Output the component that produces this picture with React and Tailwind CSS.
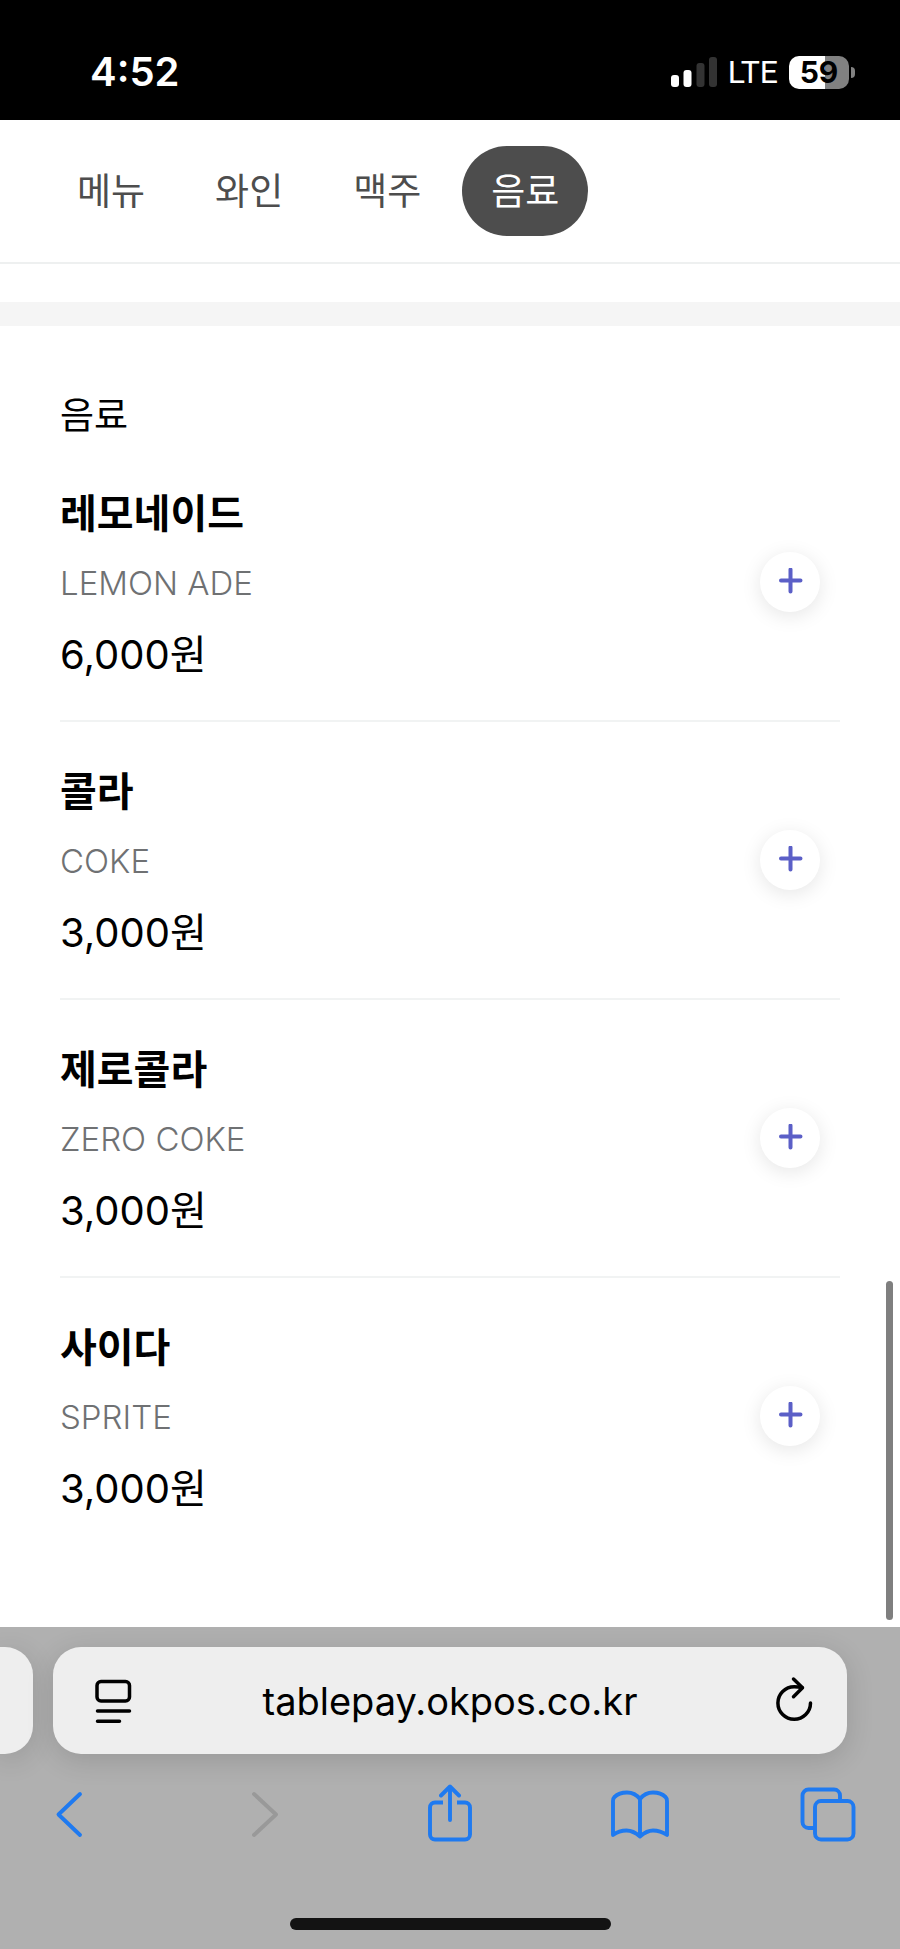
import { useState } from "react";

const categories = ["메뉴", "와인", "맥주", "음료"];

const drinks = [
  { id: 1, name: "레모네이드", description: "LEMON ADE", price: 6000 },
  { id: 2, name: "콜라", description: "COKE", price: 3000 },
  { id: 3, name: "제로콜라", description: "ZERO COKE", price: 3000 },
  { id: 4, name: "사이다", description: "SPRITE", price: 3000 },
];

function StatusBar() {
  return (
    <header className="flex h-[120px] items-center justify-between bg-black pt-6 pr-[45px] pl-[90px] text-white">
      <span className="text-[40px] leading-none font-semibold">4:52</span>

      <div className="flex items-center gap-[11px]">
        <svg width="46" height="30" viewBox="0 0 46 30" aria-hidden="true">
          <rect x="0" y="18" width="8" height="12" rx="3" fill="#fff" />
          <rect x="12.5" y="13" width="8" height="17" rx="3" fill="#fff" />
          <rect x="25.5" y="6" width="8" height="24" rx="3" fill="#333" />
          <rect x="38" y="0" width="8" height="30" rx="3" fill="#333" />
        </svg>
        <span className="font-['Roboto'] text-[32px] leading-none">LTE</span>
        <div className="flex items-center gap-[2px]">
          <div className="flex h-[33px] w-[60px] items-center justify-center rounded-[10px] bg-linear-to-r from-white from-60% to-[#818181] to-60% text-[30px] leading-none font-bold text-black">
            59
          </div>
          <div className="h-[11px] w-1 rounded-r-full bg-[#818181]" />
        </div>
      </div>
    </header>
  );
}

function CategoryTabs({ active, onChange }) {
  return (
    <nav className="flex gap-3 border-b-2 border-[#eef0f0] px-12 py-[26px]">
      {categories.map((category) => (
        <button
          key={category}
          type="button"
          onClick={() => onChange(category)}
          className={`h-[90px] rounded-full px-[29px] text-[37px] leading-none ${category === active ? "bg-[#4d4d4d] text-white" : "text-[#4d4d4d]"}`}
        >
          {category}
        </button>
      ))}
    </nav>
  );
}

function MenuItem({ item }) {
  return (
    <li className="flex items-center justify-between border-b-2 border-[#f1f3f3] pt-[42px] pb-[37px] last:border-b-0 last:pb-[34px]">
      <div>
        <h3 className="text-[40px] leading-[56px] font-bold">{item.name}</h3>
        <p className="mt-[17px] text-[33px] leading-[48px] font-light text-[#6f7173]">{item.description}</p>
        <p className="mt-5 text-[40px] leading-[56px]">{item.price.toLocaleString("en-US")}원</p>
      </div>

      <button
        type="button"
        aria-label={`${item.name} 담기`}
        className="mr-5 mb-[6px] flex size-[60px] items-center justify-center rounded-full bg-white text-[#5b5fc7] shadow-[0_4px_20px_rgba(0,0,0,0.1)]"
      >
        <svg width="28" height="28" viewBox="0 0 28 28" fill="none" stroke="currentColor" strokeWidth="4" strokeLinecap="round">
          <path d="M14.500 1.500v22M5 12.500h19.500" />
        </svg>
      </button>
    </li>
  );
}

function ToolbarButton({ label, disabled, children }) {
  return (
    <button type="button" aria-label={label} disabled={disabled} className="size-[60px] text-[#1f7af0] disabled:text-[#999]">
      <svg
        width="60"
        height="60"
        viewBox="0 0 60 60"
        fill="none"
        stroke="currentColor"
        strokeWidth="3.9"
        strokeLinecap="round"
        strokeLinejoin="round"
      >
        {children}
      </svg>
    </button>
  );
}

function BrowserBar() {
  return (
    <footer className="bg-[#b0b0b0] pt-5 pb-[19px]">
      <div className="flex gap-5 pr-[53px]">
        <div className="w-[33px] rounded-r-[28px] bg-[#eee] shadow-[0_6px_28px_rgba(0,0,0,0.14)]" />
        <div className="flex h-[107px] min-w-0 flex-1 items-center rounded-[28px] bg-[#eee] px-6 shadow-[0_6px_28px_rgba(0,0,0,0.14)]">
          <button type="button" aria-label="페이지 설정" className="size-16">
            <svg width="64" height="64" viewBox="0 0 64 64" fill="none" stroke="#000" strokeWidth="3.5" strokeLinecap="round">
              <rect x="20" y="12.5" width="32.5" height="19.5" rx="4" />
              <path d="M20.500 42h32M20.500 52.300h22" />
            </svg>
          </button>
          <input
            type="text"
            aria-label="주소"
            defaultValue="tablepay.okpos.co.kr"
            className="min-w-0 flex-1 bg-transparent text-center text-[38px] leading-[48px] outline-none"
          />
          <button type="button" aria-label="새로고침" className="size-16">
            <svg width="64" height="64" viewBox="0 0 64 64" fill="none" stroke="#000" strokeWidth="3.5" strokeLinecap="round" strokeLinejoin="round">
              <path d="M51.500 34A16.300 16.300 0 1 1 35.200 17.700q4 0 8 1" />
              <path d="M34.500 10l9 8.700-9 9" />
            </svg>
          </button>
        </div>
      </div>

      <div className="mt-[30px] flex justify-between pr-[42px] pl-10">
        <ToolbarButton label="뒤로">
          <path d="M40 10L18.500 30.500 40 51" />
        </ToolbarButton>
        <ToolbarButton label="앞으로" disabled>
          <path d="M24 10l22 20.500L24 51" />
        </ToolbarButton>
        <ToolbarButton label="공유">
          <path d="M24 18.500h-8a5 5 0 0 0-5 5v27a5 5 0 0 0 5 5h30a5 5 0 0 0 5-5v-27a5 5 0 0 0-5-5h-8" strokeLinecap="butt" />
          <path d="M31 36V3M22 11.500l9-9 9 9" />
        </ToolbarButton>
        <ToolbarButton label="책갈피">
          <path d="M31 15C27.500 10.500 23 8.500 18 8.500c-5 0-9.500 1.500-12.500 4.500Q4 14.500 4 17v34c4-3 9-4.500 13.500-4.500 5 0 9.500 2.500 13.500 6 4-3.500 8-6 13-6 4.500 0 9.500 1.500 14 4.500V17q0-2.500-1.500-4c-3-3-7.500-4.500-12.500-4.500-5 0-9.500 2-13 6.500zM31 15v37.500" />
        </ToolbarButton>
        <ToolbarButton label="탭">
          <path d="M17 44h-6.500a6 6 0 0 1-6-6V11.500a6 6 0 0 1 6-6H36a6 6 0 0 1 6 6V17" strokeLinecap="butt" />
          <rect x="17" y="17" width="38.500" height="38.500" rx="6" />
        </ToolbarButton>
      </div>

      <div className="mx-auto mt-[74px] h-3 w-[321px] rounded-full bg-[#131313]" />
    </footer>
  );
}

export default function App() {
  const [active, setActive] = useState("음료");

  return (
    <div className="flex min-h-screen flex-col bg-white font-[Inter,'Noto_Sans_CJK_KR',sans-serif] text-black">
      <StatusBar />
      <CategoryTabs active={active} onChange={setActive} />

      <main className="relative flex-1 pt-[38px]">
        <div className="h-6 bg-[#f5f5f5]" />
        <section className="px-[60px] pt-[62px]">
          <h2 className="text-[37px] leading-[56px]">음료</h2>
          <ul>
            {drinks.map((item) => (
              <MenuItem key={item.id} item={item} />
            ))}
          </ul>
        </section>

        {/* page scroll indicator */}
        <div className="absolute right-[7px] bottom-[7px] h-[339px] w-[7px] rounded-full bg-[#7f7f7f]" />
      </main>

      <BrowserBar />
    </div>
  );
}
